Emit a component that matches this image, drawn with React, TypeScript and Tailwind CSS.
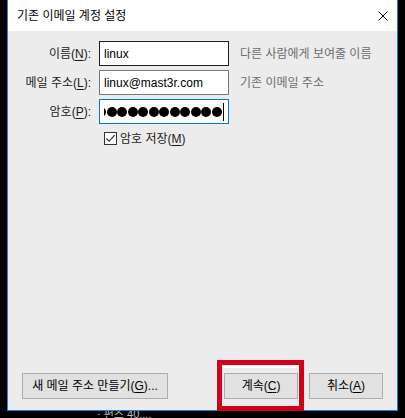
import { ReactNode } from "react";

const font = "font-['Liberation_Sans','Noto_Sans_CJK_KR',sans-serif]";

function Key({ children }: { children: ReactNode }) {
  return <span className="underline underline-offset-2">{children}</span>;
}

function Field({
  label,
  hint,
  border,
  children,
}: {
  label: ReactNode;
  hint?: string;
  border: string;
  children: ReactNode;
}) {
  return (
    <div className="flex h-[25px] items-center">
      <div className="w-[83px] text-right text-[12px] leading-none text-[#1a1a1a]">{label}</div>
      <div
        className={`ml-[8px] flex h-[25px] w-[130px] items-center overflow-hidden border bg-white pl-[4px] text-[12px] text-black ${border}`}
      >
        {children}
      </div>
      {hint && <div className="ml-[11px] text-[12px] leading-none text-[#6d6d6d]">{hint}</div>}
    </div>
  );
}

function Button({ children, width }: { children: ReactNode; width: string }) {
  return (
    <button
      className={`flex h-[26px] items-center justify-center border border-[#adadad] bg-[#e1e1e1] text-[12px] leading-none text-black ${width}`}
    >
      {children}
    </button>
  );
}

export default function App() {
  const dots = Array.from({ length: 11 });

  return (
    <div className={`relative h-[418px] w-[405px] overflow-hidden bg-black pl-[7px] ${font}`}>
      <div className="flex h-[411px] w-[391px] flex-col border-x border-b border-[#1883d7]">
        {/* title bar */}
        <div className="flex h-[31px] items-center justify-between bg-white pl-[9px] pr-[9px]">
          <span className="text-[12px] leading-none text-black">기존 이메일 계정 설정</span>
          <svg width="10" height="10" viewBox="0 0 10 10" className="text-black">
            <path d="M0.5 0.5L9.5 9.5M9.5 0.5L0.5 9.5" stroke="currentColor" strokeWidth="1" />
          </svg>
        </div>

        {/* body */}
        <div className="flex flex-1 flex-col bg-[#ececec]">
          <div className="flex flex-col gap-[4px] pt-[10px]">
            <Field
              label={<>이름(<Key>N</Key>):</>}
              hint="다른 사람에게 보여줄 이름"
              border="border-[#1e1e1e]"
            >
              linux
            </Field>
            <Field
              label={<>메일 주소(<Key>L</Key>):</>}
              hint="기존 이메일 주소"
              border="border-[#7a7a7a]"
            >
              linux@mast3r.com
            </Field>
            <Field label={<>암호(<Key>P</Key>):</>} border="border-[#0078d7]">
              <div className="flex flex-1 items-center gap-[0.5px] overflow-hidden">
                <span className="-ml-[8px] h-[10px] w-[10px] shrink-0 rounded-full bg-black" />
                {dots.map((_, i) => (
                  <span key={i} className="h-[10px] w-[10px] shrink-0 rounded-full bg-black" />
                ))}
                <span className="ml-[1px] h-[18px] w-px shrink-0 bg-black" />
              </div>
            </Field>
          </div>

          <div className="ml-[96px] mt-[8px] flex items-center gap-[3px] text-[12px] leading-none text-[#1a1a1a]">
            <span className="flex h-[13px] w-[13px] items-center justify-center border border-[#333333] bg-white">
              <svg width="11" height="11" viewBox="0 0 11 11">
                <path d="M1.5 5.5L4.2 8.3L9.6 2.2" fill="none" stroke="#222" strokeWidth="1.1" />
              </svg>
            </span>
            <span>
              암호 저장(<Key>M</Key>)
            </span>
          </div>

          <div className="mt-auto flex pb-[11px] pl-[14px] pr-[14px]">
            <Button width="w-[146px]">
              새 메일 주소 만들기(<Key>G</Key>)...
            </Button>
            <div className="ml-auto flex gap-[11px]">
              <Button width="w-[74px]">
                계속(<Key>C</Key>)
              </Button>
              <Button width="w-[74px]">
                취소(<Key>A</Key>)
              </Button>
            </div>
          </div>
        </div>
      </div>

      <div className="h-[7px] overflow-hidden pl-[90px]">
        <div className="-mt-[2px] text-[11px] leading-none text-[#bdbdbd]">· 편즈 40....</div>
      </div>

      {/* red annotation box */}
      <div className="absolute left-[217px] top-[360px] h-[51px] w-[87px] border-[5px] border-[#d0011b]">
        <div className="mt-[1px] h-[2px] bg-white" />
      </div>
    </div>
  );
}
